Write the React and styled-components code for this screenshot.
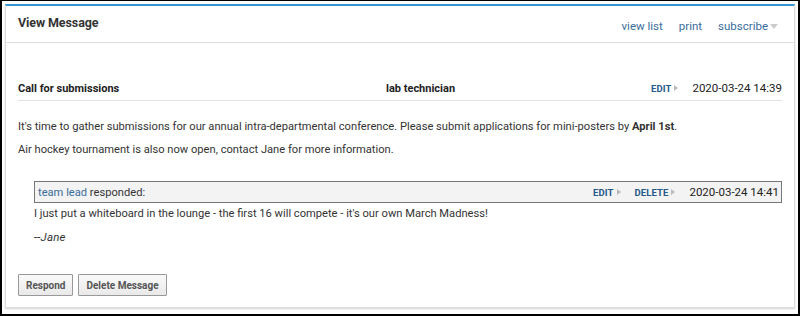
import styled, { createGlobalStyle } from 'styled-components';

const Global = createGlobalStyle`
  html, body { margin: 0; padding: 0; background: #fff; }
  body { font-family: Roboto, "Liberation Sans", Arial, sans-serif; color: #333; }
`;

const Frame = styled.div`
  width: 800px; height: 316px; box-sizing: border-box;
  border-style: solid; border-color: #000; border-width: 1px 2px 2px 2px;
  padding: 3px 3px 0 3px; background: #fff;
`;
const Panel = styled.section`
  border: 1px solid #ddd; border-top: 2px solid #3495d2;
  box-shadow: 0 1px 2px rgba(0,0,0,0.18);
  height: 304px; box-sizing: border-box;
  display: flex; flex-direction: column;
`;
const Header = styled.header`
  height: 37px; box-sizing: border-box; padding: 0 12px 0 12px;
  border-bottom: 1px solid #ddd;
  display: flex; align-items: center; justify-content: space-between;
`;
const Title = styled.h2`
  margin: 0; font-size: 12.5px; font-weight: 700; color: #333; letter-spacing: -0.1px;
  padding-bottom: 4px;
`;
const HeaderLinks = styled.nav`
  display: flex; gap: 16px; align-items: center; font-size: 11.5px; padding-top: 4px; padding-right: 4px;
`;
const HLink = styled.a`color: #3a6d9c; text-decoration: none; display: inline-flex; align-items: center;`;
const Caret = styled.span`
  display: inline-block; width: 0; height: 0; margin-left: 2px; margin-top: 1px;
  border-left: 4px solid transparent; border-right: 4px solid transparent; border-top: 5px solid #ccc;
`;
const Body = styled.div`padding: 34px 12px 0 12px;`;
const MsgRow = styled.div`
  display: grid; grid-template-columns: 368px 1fr auto auto; align-items: center;
  height: 22px; border-bottom: 1px solid #e3e3e3; font-size: 11px; font-weight: 700; color: #222;
  padding-bottom: 1px;
`;
const Actions = styled.div`display: flex; gap: ${p => p.$gap || 14}px; align-items: center; margin-right: ${p => p.$right ?? 14}px;`;
const Action = styled.a`
  font-size: 9.5px; font-weight: 700; color: #24598a; text-decoration: none;
  display: inline-flex; align-items: center; letter-spacing: 0.1px;
`;
const Tri = styled.span`
  display: inline-block; width: 0; height: 0; margin-left: 3px;
  border-top: 3.5px solid transparent; border-bottom: 3.5px solid transparent; border-left: 4px solid #bbb;
`;
const Date = styled.span`font-size: 11.5px; font-weight: 400; color: #222;`;
const Para = styled.p`margin: ${p => p.$top || 0}px 0 0 0; font-size: 11.15px; line-height: 15px; color: #333;`;
const Response = styled.div`margin: 24px 0 0 16px;`;
const RespHead = styled.div`
  height: 22px; box-sizing: border-box; border: 1px solid #777; background: #f3f3f3;
  display: flex; align-items: center; justify-content: space-between; padding: 0 2px 0 3px;
  font-size: 11.15px; color: #333;
`;
const Blue = styled.a`color: #3a6d9c; text-decoration: none;`;
const RespText = styled.p`margin: 3px 0 0 0; font-size: 11.15px; line-height: 15px; color: #333;`;
const Sig = styled.p`margin: 9px 0 0 0; font-size: 11.5px; font-style: italic; color: #333; letter-spacing: 0.2px;`;
const Buttons = styled.div`display: flex; gap: 5px; margin-top: 30px;`;
const Button = styled.button`
  height: 22px; padding: 0 7px; border: 1px solid #999; border-radius: 1px;
  background: linear-gradient(#fafafa, #e9e9e9); color: #555;
  font-family: Roboto, "Liberation Sans", Arial, sans-serif; font-size: 10px; font-weight: 700;
`;

export default function App() {
  return (
    <Frame>
      <Global />
      <Panel>
        <Header>
          <Title>View Message</Title>
          <HeaderLinks>
            <HLink href="#">view list</HLink>
            <HLink href="#">print</HLink>
            <HLink href="#">subscribe<Caret /></HLink>
          </HeaderLinks>
        </Header>
        <Body>
          <MsgRow>
            <span>Call for submissions</span>
            <span>lab technician</span>
            <Actions><Action href="#">EDIT<Tri /></Action></Actions>
            <Date>2020-03-24 14:39</Date>
          </MsgRow>
          <Para $top={18}>It's time to gather submissions for our annual intra-departmental conference. Please submit applications for mini-posters by <b>April 1st</b>.</Para>
          <Para $top={8}>Air hockey tournament is also now open, contact Jane for more information.</Para>
          <Response>
            <RespHead>
              <span><Blue href="#">team lead</Blue> responded:</span>
              <Actions $right={0} $gap={14}>
                <Action href="#">EDIT<Tri /></Action>
                <Action href="#">DELETE<Tri /></Action>
                <Date>2020-03-24 14:41</Date>
              </Actions>
            </RespHead>
            <RespText>I just put a whiteboard in the lounge - the first 16 will compete - it's our own March Madness!</RespText>
            <Sig>--Jane</Sig>
          </Response>
          <Buttons>
            <Button>Respond</Button>
            <Button>Delete Message</Button>
          </Buttons>
        </Body>
      </Panel>
    </Frame>
  );
}
